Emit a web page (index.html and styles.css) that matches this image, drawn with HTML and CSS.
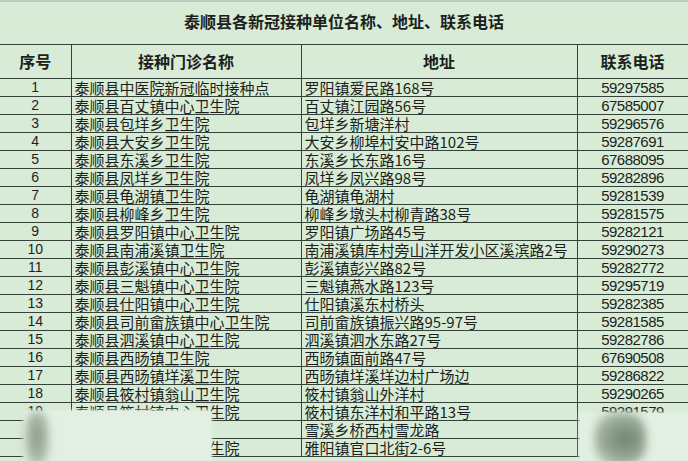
FILE: index.html
```html
<!DOCTYPE html>
<html lang="zh">
<head>
<meta charset="utf-8">
<title>泰顺县各新冠接种单位名称、地址、联系电话</title>
<link rel="stylesheet" href="styles.css">
</head>
<body>
<div class="sheet">
  <div class="title">泰顺县各新冠接种单位名称、地址、联系电话</div>
  <table class="grid">
    <colgroup>
      <col class="c-no"><col class="c-name"><col class="c-addr"><col class="c-tel">
    </colgroup>
    <thead>
      <tr><th>序号</th><th>接种门诊名称</th><th>地址</th><th>联系电话</th></tr>
    </thead>
    <tbody>
      <tr><td class="no">1</td><td>泰顺县中医院新冠临时接种点</td><td>罗阳镇爱民路168号</td><td class="tel">59297585</td></tr>
      <tr><td class="no">2</td><td>泰顺县百丈镇中心卫生院</td><td>百丈镇江园路56号</td><td class="tel">67585007</td></tr>
      <tr><td class="no">3</td><td>泰顺县包垟乡卫生院</td><td>包垟乡新塘洋村</td><td class="tel">59296576</td></tr>
      <tr><td class="no">4</td><td>泰顺县大安乡卫生院</td><td>大安乡柳埠村安中路102号</td><td class="tel">59287691</td></tr>
      <tr><td class="no">5</td><td>泰顺县东溪乡卫生院</td><td>东溪乡长东路16号</td><td class="tel">67688095</td></tr>
      <tr><td class="no">6</td><td>泰顺县凤垟乡卫生院</td><td>凤垟乡凤兴路98号</td><td class="tel">59282896</td></tr>
      <tr><td class="no">7</td><td>泰顺县龟湖镇卫生院</td><td>龟湖镇龟湖村</td><td class="tel">59281539</td></tr>
      <tr><td class="no">8</td><td>泰顺县柳峰乡卫生院</td><td>柳峰乡墩头村柳青路38号</td><td class="tel">59281575</td></tr>
      <tr><td class="no">9</td><td>泰顺县罗阳镇中心卫生院</td><td>罗阳镇广场路45号</td><td class="tel">59282121</td></tr>
      <tr><td class="no">10</td><td>泰顺县南浦溪镇卫生院</td><td>南浦溪镇库村旁山洋开发小区溪滨路2号</td><td class="tel">59290273</td></tr>
      <tr><td class="no">11</td><td>泰顺县彭溪镇中心卫生院</td><td>彭溪镇彭兴路82号</td><td class="tel">59282772</td></tr>
      <tr><td class="no">12</td><td>泰顺县三魁镇中心卫生院</td><td>三魁镇燕水路123号</td><td class="tel">59295719</td></tr>
      <tr><td class="no">13</td><td>泰顺县仕阳镇中心卫生院</td><td>仕阳镇溪东村桥头</td><td class="tel">59282385</td></tr>
      <tr><td class="no">14</td><td>泰顺县司前畲族镇中心卫生院</td><td>司前畲族镇振兴路95-97号</td><td class="tel">59281585</td></tr>
      <tr><td class="no">15</td><td>泰顺县泗溪镇中心卫生院</td><td>泗溪镇泗水东路27号</td><td class="tel">59282786</td></tr>
      <tr><td class="no">16</td><td>泰顺县西旸镇卫生院</td><td>西旸镇面前路47号</td><td class="tel">67690508</td></tr>
      <tr><td class="no">17</td><td>泰顺县西旸镇垟溪卫生院</td><td>西旸镇垟溪垟边村广场边</td><td class="tel">59286822</td></tr>
      <tr><td class="no">18</td><td>泰顺县筱村镇翁山卫生院</td><td>筱村镇翁山外洋村</td><td class="tel">59290265</td></tr>
      <tr><td class="no">19</td><td>泰顺县筱村镇中心卫生院</td><td>筱村镇东洋村和平路13号</td><td class="tel">59291579</td></tr>
      <tr><td class="no">20</td><td>泰顺县雪溪乡卫生院</td><td>雪溪乡桥西村雪龙路</td><td class="tel">59295123</td></tr>
      <tr><td class="no">21</td><td>泰顺县雅阳镇中心卫生院</td><td>雅阳镇官口北街2-6号</td><td class="tel">59271120</td></tr>
    </tbody>
  </table>
  <div class="mask mask-left"></div>
  <div class="blob blob-left"></div>
  <div class="mask mask-right"></div>
  <div class="blob blob-right"></div>
</div>
</body>
</html>
```

FILE: styles.css
```css
html, body {
  margin: 0;
  padding: 0;
  background: #d7ebd6;
}

body {
  width: 688px;
  height: 461px;
  overflow: hidden;
  font-family: "Liberation Sans", "Noto Sans CJK SC", sans-serif;
  color: #1c1f1c;
}

.sheet {
  position: relative;
  width: 688px;
  height: 461px;
  border-top: 2px solid #bfcabf;
  box-sizing: border-box;
}

.title {
  height: 42px;
  display: flex;
  align-items: center;
  justify-content: center;
  font-family: "Noto Sans CJK SC", sans-serif;
  font-weight: 700;
  font-size: 16px;
  padding-bottom: 4px;
  box-sizing: border-box;
}

.grid {
  width: 688px;
  table-layout: fixed;
  border-collapse: collapse;
}

.c-no { width: 71px; }
.c-name { width: 230px; }
.c-addr { width: 276px; }
.c-tel { width: 111px; }

.grid th, .grid td {
  border: 1px solid #34423a;
  padding: 0;
  white-space: nowrap;
  overflow: hidden;
}

.grid th:first-child, .grid td:first-child {
  border-left: none;
}

.grid th {
  font-family: "Noto Sans CJK SC", sans-serif;
  font-weight: 700;
  font-size: 16px;
  text-align: center;
  line-height: 33px;
}

.grid td {
  font-family: "Noto Sans CJK SC", sans-serif;
  font-size: 15px;
  line-height: 17px;
  padding: 0 0 0 3px;
  vertical-align: bottom;
}

.grid td.no, .grid td.tel {
  text-align: center;
  padding-left: 0;
  font-family: "Liberation Sans", sans-serif;
  font-size: 15px;
  letter-spacing: -0.5px;
}

.grid td.no {
  font-size: 14px;
  letter-spacing: 0;
}

.mask {
  position: absolute;
  background: #e3efe2;
  box-shadow: 0 0 3px 1px #e3efe2;
}

.mask-left {
  left: 24px;
  top: 409px;
  width: 187px;
  height: 56px;
}

.mask-right {
  left: 580px;
  top: 411px;
  width: 110px;
  height: 54px;
}

.blob {
  position: absolute;
  border-radius: 40%;
  filter: blur(4px);
}

.blob-left {
  left: 25px;
  top: 410px;
  width: 24px;
  height: 54px;
  background: radial-gradient(ellipse at 50% 45%, #8a9a8a 0%, #a9b8a8 55%, rgba(200, 215, 200, 0) 100%);
}

.blob-right {
  left: 594px;
  top: 410px;
  width: 52px;
  height: 54px;
  background: radial-gradient(ellipse at 60% 50%, #708270 0%, #9aab99 55%, rgba(200, 215, 200, 0) 100%);
}
```
